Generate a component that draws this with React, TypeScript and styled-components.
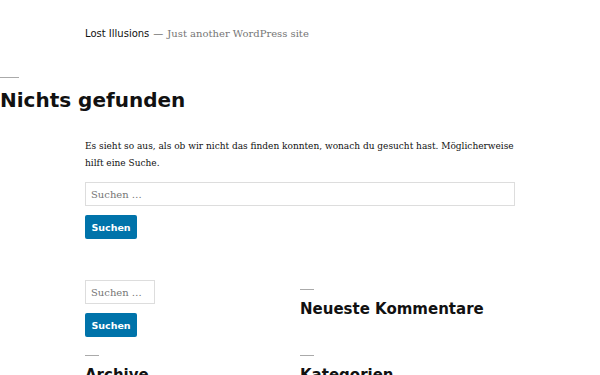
import React from 'react';
import styled, { createGlobalStyle } from 'styled-components';

const GlobalStyle = createGlobalStyle`
  html, body {
    margin: 0;
    padding: 0;
    background: #fff;
  }
  body {
    font-family: "DejaVu Serif", "Liberation Serif", serif;
    color: #111;
  }
  * {
    box-sizing: border-box;
  }
`;

const sans = `"DejaVu Sans", "Liberation Sans", sans-serif`;

const Page = styled.div`
  width: 600px;
  min-height: 375px;
  overflow: hidden;
`;

const SiteHeader = styled.header`
  padding: 27px 0 0 85px;
  display: flex;
  align-items: baseline;
  gap: 4px;
  font-size: 10px;
  line-height: 14px;
`;

const SiteTitle = styled.a`
  font-family: ${sans};
  color: #111;
  text-decoration: none;
`;

const Tagline = styled.span`
  color: #767676;

  &::before {
    content: '—';
    font-family: ${sans};
    margin-right: 4px;
  }
`;

const PageHeader = styled.header`
  margin-top: 36px;

  &::before {
    content: '';
    display: block;
    width: 19px;
    height: 1px;
    background: #aaa;
    margin-bottom: 10px;
  }
`;

const PageTitle = styled.h1`
  margin: 0;
  font-family: ${sans};
  font-weight: 700;
  font-size: 20px;
  line-height: 24px;
  color: #111;
`;

const Content = styled.div`
  margin: 25px 0 0 85px;
  width: 430px;
`;

const Text = styled.p`
  margin: 0 0 11px;
  font-family: "DejaVu Serif Condensed", "DejaVu Serif", serif;
  font-stretch: condensed;
  font-size: 10px;
  line-height: 17px;
`;

const SearchForm = styled.form`
  display: flex;
  flex-direction: column;
  align-items: flex-start;
  gap: 9px;
`;

const SearchField = styled.input<{ $width?: number }>`
  -webkit-appearance: none;
  appearance: none;
  width: ${p => (p.$width ? `${p.$width}px` : '100%')};
  height: 24px;
  padding: 0 4px 0 5px;
  border: 1px solid #ddd;
  border-radius: 0;
  font-family: "DejaVu Serif", serif;
  font-size: 10px;
  color: #111;
  background: #fff;
  outline: none;

  &::placeholder {
    color: #767676;
  }
`;

const SearchButton = styled.button`
  width: 52px;
  height: 24px;
  padding: 0;
  border: none;
  border-radius: 2px;
  background: #0073aa;
  color: #fff;
  font-family: ${sans};
  font-weight: 700;
  font-size: 9.5px;
  cursor: pointer;
`;

const WidgetArea = styled.aside`
  margin: 41px 0 0 85px;
  display: grid;
  grid-template-columns: 215px 215px;
  row-gap: 18px;
  align-items: start;
`;

const Widget = styled.section<{ $offset?: number }>`
  padding-top: ${p => p.$offset ?? 0}px;
`;

const WidgetTitle = styled.h2`
  margin: 0;
  font-family: ${sans};
  font-weight: 700;
  font-size: 15px;
  line-height: 18px;
  color: #111;

  &::before {
    content: '';
    display: block;
    width: 14px;
    height: 1px;
    background: #aaa;
    margin-bottom: 10px;
  }
`;

export default function App() {
  return (
    <Page>
      <GlobalStyle />
      <SiteHeader>
        <SiteTitle href="#">Lost Illusions</SiteTitle>
        <Tagline>Just another WordPress site</Tagline>
      </SiteHeader>

      <main>
        <PageHeader>
          <PageTitle>Nichts gefunden</PageTitle>
        </PageHeader>

        <Content>
          <Text>
            Es sieht so aus, als ob wir nicht das finden konnten, wonach du gesucht hast. Möglicherweise
            hilft eine Suche.
          </Text>
          <SearchForm onSubmit={e => e.preventDefault()}>
            <SearchField type="text" placeholder="Suchen …" />
            <SearchButton type="submit">Suchen</SearchButton>
          </SearchForm>
        </Content>
      </main>

      <WidgetArea>
        <Widget>
          <SearchForm onSubmit={e => e.preventDefault()}>
            <SearchField type="text" placeholder="Suchen …" $width={70} />
            <SearchButton type="submit">Suchen</SearchButton>
          </SearchForm>
        </Widget>
        <Widget $offset={9}>
          <WidgetTitle>Neueste Kommentare</WidgetTitle>
        </Widget>
        <Widget>
          <WidgetTitle>Archive</WidgetTitle>
        </Widget>
        <Widget>
          <WidgetTitle>Kategorien</WidgetTitle>
        </Widget>
      </WidgetArea>
    </Page>
  );
}
